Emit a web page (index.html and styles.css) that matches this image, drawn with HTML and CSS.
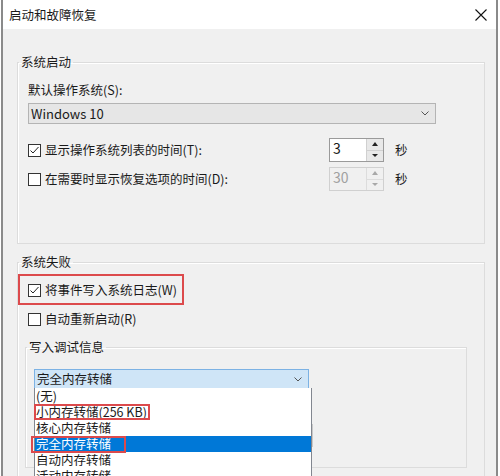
FILE: index.html
```html
<!DOCTYPE html>
<html lang="zh-CN">

<head>
    <meta charset="UTF-8">
    <title>启动和故障恢复</title>
    <link rel="stylesheet" href="styles.css">
</head>

<body>
    <div class="window">
        <div class="titlebar">
            <span class="title">启动和故障恢复</span>
            <svg class="close" width="12" height="12" viewBox="0 0 12 12">
                <path d="M0.5 0.5 L11.5 11.5 M11.5 0.5 L0.5 11.5" stroke="#111" stroke-width="1.1" fill="none"/>
            </svg>
        </div>

        <div class="content">
            <!-- System startup -->
            <fieldset class="group">
                <legend>系统启动</legend>
                <div class="group-body startup">
                    <div class="field-label">默认操作系统(S):</div>
                    <div class="combo combo-os">
                        <span>Windows 10</span>
                        <svg class="chev" width="8" height="5" viewBox="0 0 8 5"><path d="M0.5 0.5 L4 4 L7.5 0.5" stroke="#555" fill="none"/></svg>
                    </div>

                    <div class="row first-row">
                        <div class="label-cell">
                            <span class="check">
                                <svg width="11" height="11" viewBox="0 0 11 11"><path d="M1.5 5.5 L4 8 L9.5 2" stroke="#222" stroke-width="1" fill="none"/></svg>
                            </span>
                            <span>显示操作系统列表的时间(T):</span>
                        </div>
                        <div class="spin">
                            <div class="spin-text">3</div>
                            <div class="spin-btns">
                                <span class="up"></span>
                                <span class="down"></span>
                            </div>
                        </div>
                        <span class="unit">秒</span>
                    </div>

                    <div class="row">
                        <div class="label-cell">
                            <span class="check"></span>
                            <span>在需要时显示恢复选项的时间(D):</span>
                        </div>
                        <div class="spin disabled">
                            <div class="spin-text">30</div>
                            <div class="spin-btns">
                                <span class="up"></span>
                                <span class="down"></span>
                            </div>
                        </div>
                        <span class="unit">秒</span>
                    </div>
                </div>
            </fieldset>

            <!-- System failure -->
            <fieldset class="group failure">
                <legend>系统失败</legend>
                <div class="group-body failure-body">
                    <div class="marked-row">
                        <span class="check">
                            <svg width="11" height="11" viewBox="0 0 11 11"><path d="M1.5 5.5 L4 8 L9.5 2" stroke="#222" stroke-width="1" fill="none"/></svg>
                        </span>
                        <span>将事件写入系统日志(W)</span>
                    </div>

                    <div class="check-row">
                        <span class="check"></span>
                        <span>自动重新启动(R)</span>
                    </div>

                    <fieldset class="group debug">
                        <legend>写入调试信息</legend>
                        <div class="group-body debug-body">
                            <div class="combo combo-dump open">
                                <span>完全内存转储</span>
                                <svg class="chev" width="8" height="5" viewBox="0 0 8 5"><path d="M0.5 0.5 L4 4 L7.5 0.5" stroke="#555" fill="none"/></svg>

                                <ul class="dropdown">
                                    <li>(无)</li>
                                    <li><span class="mark mark-small">小内存转储(256 KB)</span></li>
                                    <li>核心内存转储</li>
                                    <li class="selected"><span class="mark mark-full">完全内存转储</span></li>
                                    <li>自动内存转储</li>
                                    <li>活动内存转储</li>
                                </ul>
                            </div>
                            <!-- dump file box, hidden behind the open list -->
                            <div class="path-box"></div>
                        </div>
                    </fieldset>
                </div>
            </fieldset>
        </div>
    </div>
</body>

</html>
```

FILE: styles.css
```css
/* Page */
body {
    margin: 0;
    width: 500px;
    height: 476px;
    overflow: hidden;
    background-color: #ffffff;
    font-family: "Noto Sans CJK SC", "Noto Sans", sans-serif;
    font-size: 12.5px;
    line-height: 16px;
    color: #1a1a1a;
}

.window {
    margin-left: 1px;
    width: 497px;
    height: 476px;
    box-sizing: border-box;
    border-left: 2px solid #8a8a8a;
    border-right: 2px solid #8a8a8a;
    background-color: #f0f0f0;
    overflow: hidden;
}

/* Title bar */
.titlebar {
    height: 29px;
    background-color: #ffffff;
    display: flex;
    align-items: center;
    justify-content: space-between;
    padding: 0 9px 0 6px;
}

.title {
    font-size: 12.5px;
}

.close {
    display: block;
    margin-top: 1px;
}

/* Group boxes */
.content {
    padding: 25px 11px 0 14px;
}

.group {
    margin: 0;
    padding: 0;
    min-width: 0;
    border: 1px solid #dcdcdc;
    box-shadow: inset 1px 1px 0 #ffffff;
}

.group legend {
    margin-left: 1px;
    padding: 0 2px;
    line-height: 16px;
}

.group-body {
    padding: 12px 11px 52px 10px;
}

.failure {
    margin-top: 10px;
}

.failure-body {
    padding: 4px 17px 40px 7px;
}

.debug {
    margin-top: 10px;
}

.debug-body {
    padding: 14px 8px 20px 8px;
}

/* Combo boxes */
.field-label {
    height: 16px;
}

.combo {
    position: relative;
    display: flex;
    align-items: center;
    justify-content: space-between;
    box-sizing: border-box;
    border: 1px solid #b4b4b4;
    background-color: #e6e6e6;
    padding: 0 6px 0 2px;
}

.combo-os {
    margin-top: 5px;
    width: 408px;
    height: 21px;
    font-size: 13px;
}

.combo-dump {
    width: 275px;
    height: 20px;
    border-color: #7cb2e4;
    background-color: #cfe5f7;
}

.chev {
    display: block;
}

/* Open dropdown list */
.dropdown {
    position: absolute;
    top: 100%;
    left: -1px;
    width: 276px;
    margin: 0;
    padding: 0;
    list-style: none;
    background-color: #ffffff;
    border: 1px solid #828790;
    border-top: none;
    z-index: 2;
}

.dropdown li {
    height: 16px;
    padding-left: 1px;
    white-space: nowrap;
}

.dropdown li.selected {
    background-color: #0078d7;
    color: #ffffff;
}

.mark {
    display: inline-block;
    height: 16px;
    outline: 2px solid #dc4a4c;
    outline-offset: -2px;
}

.mark-small {
    margin-left: -2px;
    padding: 0 3px 0 2px;
}

.mark-full {
    margin-left: -5px;
    padding: 0 15px 0 5px;
    height: 17px;
}

.path-box {
    margin-top: 35px;
    width: 279px;
    height: 23px;
    box-sizing: border-box;
    border: 1px solid #c8c8c8;
    background-color: #ffffff;
}

/* Checkbox rows */
.row {
    display: flex;
    align-items: center;
    height: 24px;
    margin-top: 5px;
}

.first-row {
    margin-top: 14px;
}

.label-cell {
    width: 301px;
    display: flex;
    align-items: center;
}

.check {
    width: 13px;
    height: 13px;
    box-sizing: border-box;
    border: 1px solid #333333;
    background-color: #ffffff;
    margin-right: 4px;
    flex-shrink: 0;
    display: flex;
    align-items: center;
    justify-content: center;
}

.check svg {
    display: block;
}

.marked-row {
    display: inline-flex;
    align-items: center;
    height: 20px;
    margin-left: -7px;
    padding: 4px 5px 3px 8px;
    border: 2px solid #dc4a4c;
}

.check-row {
    display: flex;
    align-items: center;
    height: 20px;
    margin-top: 4px;
    margin-left: 3px;
}

/* Spinners */
.spin {
    display: flex;
    width: 55px;
    height: 24px;
    box-sizing: border-box;
    border: 1px solid #9a9a9a;
    background-color: #ffffff;
}

.spin-text {
    flex: 1;
    padding: 1px 0 0 3px;
    font-size: 14px;
}

.spin-btns {
    width: 16px;
    display: flex;
    flex-direction: column;
    border-left: 1px solid #d0d0d0;
    background-color: #e8e8e8;
}

.spin-btns span {
    flex: 1;
    display: flex;
    align-items: center;
    justify-content: center;
}

.spin-btns .up {
    border-bottom: 1px solid #d0d0d0;
}

.spin-btns .up::after {
    content: "";
    border-left: 3px solid transparent;
    border-right: 3px solid transparent;
    border-bottom: 4px solid #222222;
}

.spin-btns .down::after {
    content: "";
    border-left: 3px solid transparent;
    border-right: 3px solid transparent;
    border-top: 3px solid #222222;
}

.spin.disabled {
    border-color: #d0d0d0;
    background-color: #f0f0f0;
    color: #a0a0a0;
}

.spin.disabled .spin-btns {
    background-color: #f0f0f0;
    border-left-color: #dcdcdc;
}

.spin.disabled .spin-btns .up {
    border-bottom-color: #dcdcdc;
}

.spin.disabled .up::after {
    border-bottom-color: #a8a8a8;
}

.spin.disabled .down::after {
    border-top-color: #a8a8a8;
}

.unit {
    margin-left: 11px;
}
```
